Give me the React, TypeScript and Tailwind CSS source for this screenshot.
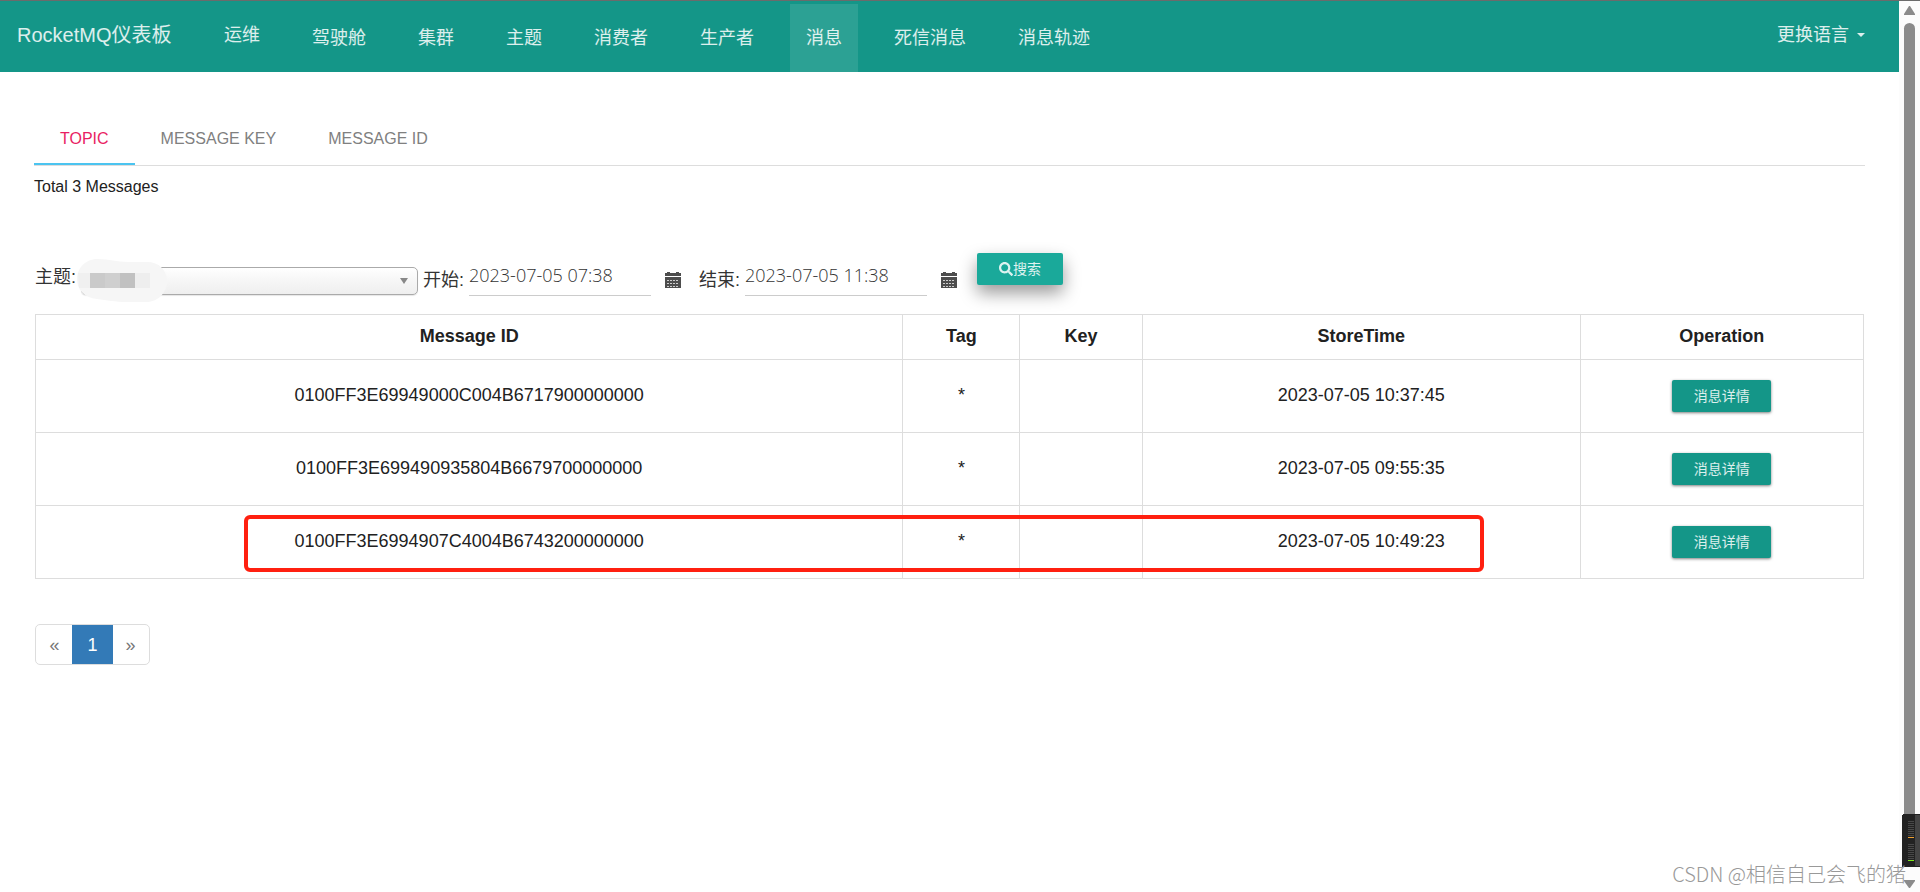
import { useState } from 'react';
import { FaSearch } from 'react-icons/fa';

interface Message {
  id: string;
  tag: string;
  key: string;
  storeTime: string;
}

const NAV_ITEMS = ['驾驶舱', '集群', '主题', '消费者', '生产者', '消息', '死信消息', '消息轨迹'];

const TABS = ['Topic', 'Message Key', 'Message ID'];

const MESSAGES: Message[] = [
  { id: '0100FF3E69949000C004B6717900000000', tag: '*', key: '', storeTime: '2023-07-05 10:37:45' },
  { id: '0100FF3E699490935804B6679700000000', tag: '*', key: '', storeTime: '2023-07-05 09:55:35' },
  { id: '0100FF3E6994907C4004B6743200000000', tag: '*', key: '', storeTime: '2023-07-05 10:49:23' },
];

function Navbar(): JSX.Element {
  return (
    <nav className="flex h-[72px] items-start border-t border-[#6b6b6b] bg-[#149688] text-lg leading-7 text-white/85">
      <a href="#/" className="w-[208px] shrink-0 pt-5 pl-[17px] text-xl leading-7">
        RocketMQ仪表板
      </a>
      <ul className="flex gap-5">
        <li>
          <a href="#/ops" className="block px-4 pt-5">
            运维
          </a>
        </li>
        {NAV_ITEMS.map((item) => (
          <li key={item} className="pt-[3px]">
            <a href={`#/${item}`} className={`block h-[68px] px-4 pt-5 ${item === '消息' ? 'bg-white/10' : ''}`}>
              {item}
            </a>
          </li>
        ))}
      </ul>
      <button type="button" className="mr-[34px] ml-auto flex items-center gap-2 pt-5">
        更换语言
        <span className="border-x-4 border-t-4 border-x-transparent border-t-white/85" />
      </button>
    </nav>
  );
}

/** Dotted month-sheet glyph that sits next to each date field. */
function CalendarIcon(): JSX.Element {
  return (
    <svg viewBox="0 0 16 16" className="h-4 w-4 fill-[#4d4d4d]" shapeRendering="crispEdges" aria-hidden="true">
      <path d="M0 1h2V0h3v1h6V0h3v1h2v3H0z" />
      <path d="M0 5h16v11H0z" />
      <path d="M2 8.5h12M2 11.5h12M2 14.5h12" stroke="#ccc" strokeDasharray="2 1" />
    </svg>
  );
}

interface DateFieldProps {
  id: string;
  label: string;
  initial: string;
}

function DateField({ id, label, initial }: DateFieldProps): JSX.Element {
  const [value, setValue] = useState(initial);

  return (
    <div className="flex items-start">
      <label htmlFor={id} className="w-[46px] pt-[13px]">
        {label}:
      </label>
      <input
        id={id}
        value={value}
        onChange={(e) => setValue(e.target.value)}
        className="h-[43px] w-[182px] border-b border-[#ccc] pt-1 pb-[2px] font-['Open_Sans',sans-serif] text-lg font-light text-[#333] outline-none"
      />
      <button type="button" aria-label={`${label}日期`} className="mt-[19px] ml-[14px]">
        <CalendarIcon />
      </button>
    </div>
  );
}

/** Mosaic smudge hiding the topic name. */
function TopicMask(): JSX.Element {
  return (
    <svg viewBox="0 0 90 44" className="pointer-events-none absolute -top-2 -left-1 h-11 w-[90px]" aria-hidden="true">
      <path d="M20 0C34 0 38 3 52 3h18c12 0 20 8 20 19s-8 21-21 21H50C38 43 30 41 20 40 8 39 0 31 0 20S9 0 20 0z" fill="#f6f6f6" />
      <path d="M1 14h12v15H2z" fill="#f0f0f0" />
      <path d="M13 14h15v15H13z" fill="#cacaca" />
      <path d="M28 14h15v15H28z" fill="#cfcfcf" />
      <path d="M43 14h15v15H43z" fill="#c1c1c1" />
      <path d="M58 14h15v15H58z" fill="#eee" />
    </svg>
  );
}

function SearchForm(): JSX.Element {
  return (
    <form className="flex items-start text-lg leading-7 text-[#333]" onSubmit={(e) => e.preventDefault()}>
      <label htmlFor="topic" className="w-[46px] pt-[10px]">
        主题:
      </label>
      <div className="relative mt-[14px] w-[337px]">
        <select
          id="topic"
          className="block h-7 w-full appearance-none rounded-[5px] border border-[#aaa] bg-linear-to-b from-white via-[#f6f6f6] to-[#efefef] px-2 text-sm shadow-[0_1px_1px_rgba(0,0,0,0.1)]"
        />
        <span className="pointer-events-none absolute top-[11px] right-[10px] border-x-4 border-t-[6px] border-x-transparent border-t-[#888]" />
        <TopicMask />
      </div>
      <div className="ml-[5px] flex gap-[18px]">
        <DateField id="begin" label="开始" initial="2023-07-05 07:38" />
        <DateField id="end" label="结束" initial="2023-07-05 11:38" />
      </div>
      <button
        type="submit"
        className="ml-5 flex h-8 w-[86px] items-center justify-center rounded-xs bg-[#1aa99a] text-sm text-white/85 shadow-[0_8px_17px_rgba(0,0,0,0.4)]"
      >
        <FaSearch className="h-[14px] w-[14px]" />
        搜索
      </button>
    </form>
  );
}

function MessageTable(): JSX.Element {
  return (
    <div className="relative mr-px">
      <table className="w-full table-fixed border-collapse text-center text-lg leading-6 text-[#212121]">
        <colgroup>
          <col className="w-[47.45%]" />
          <col className="w-[6.4%]" />
          <col className="w-[6.7%]" />
          <col className="w-[23.95%]" />
          <col className="w-[15.5%]" />
        </colgroup>
        <thead>
          <tr className="h-[45px]">
            {['Message ID', 'Tag', 'Key', 'StoreTime', 'Operation'].map((heading) => (
              <th key={heading} className="border border-[#ddd] pb-[2px]">
                {heading}
              </th>
            ))}
          </tr>
        </thead>
        <tbody>
          {MESSAGES.map((message) => (
            <tr key={message.id} className="h-[73px]">
              <td className="border border-[#ddd] pb-[2px]">{message.id}</td>
              <td className="border border-[#ddd] pb-[2px]">{message.tag}</td>
              <td className="border border-[#ddd] pb-[2px]">{message.key}</td>
              <td className="border border-[#ddd] pb-[2px]">{message.storeTime}</td>
              <td className="border border-[#ddd]">
                <button type="button" className="h-8 w-[99px] rounded-xs bg-[#149688] align-middle text-sm text-white/85 shadow-[0_1px_3px_rgba(0,0,0,0.5)]">
                  消息详情
                </button>
              </td>
            </tr>
          ))}
        </tbody>
      </table>
      <div className="pointer-events-none absolute right-[20.8%] bottom-[7px] left-[11.45%] h-[57px] rounded-md border-4 border-[#ff2010]" />
    </div>
  );
}

function Pagination(): JSX.Element {
  return (
    <div className="flex h-[41px] w-[115px] overflow-hidden rounded-[5px] border border-[#ddd] text-lg text-[#777]">
      <button type="button" aria-label="Previous" className="flex-1">
        «
      </button>
      <button type="button" className="w-[39px] bg-[#337ab7] text-white outline outline-[#337ab7]">
        1
      </button>
      <button type="button" aria-label="Next" className="flex-1">
        »
      </button>
    </div>
  );
}

function ScrollRail(): JSX.Element {
  return (
    <aside className="relative flex w-[21px] flex-col items-center border-t border-[#6b6b6b] bg-[#fcfcfc] pt-[5px] pb-1">
      <svg viewBox="0 0 11 9" className="h-[9px] w-[11px] fill-[#8b8b8b]" aria-hidden="true">
        <path d="M5 0h1l5 8v1H0V8z" />
      </svg>
      <div className="mt-2 mb-[15px] w-[11px] flex-1 rounded-full bg-[#8b8b8b]" />
      <svg viewBox="0 0 11 8" className="h-2 w-[11px] fill-[#8b8b8b]" aria-hidden="true">
        <path d="M5 8h1l5-7V0H0v1z" />
      </svg>
      <svg viewBox="0 0 18 53" className="absolute right-0 bottom-[25px] h-[53px] w-[18px]" shapeRendering="crispEdges" aria-hidden="true">
        <rect width="22" height="53" rx="2" fill="#222" />
        <path d="M13 1h5v51h-5z" fill="#444" />
        <path d="M6 7.5h6M6 9.5h6M6 11.5h6M6 13.5h6M6 15.5h6M6 17.5h6M6 19.5h6M6 21.5h6M6 30.5h6M6 32.5h6M6 34.5h6M6 36.5h6M6 38.5h6M6 40.5h6M6 42.5h6M6 44.5h6" stroke="#484848" />
        <path d="M6 23.5h6" stroke="#f0a030" />
        <path d="M6 46.5h6" stroke="#7ee81a" />
      </svg>
    </aside>
  );
}

export default function App(): JSX.Element {
  const [activeTab, setActiveTab] = useState('Topic');

  return (
    <div className="relative flex min-h-screen bg-white font-['Liberation_Sans','Noto_Sans_CJK_SC',sans-serif]">
      <div className="min-w-0 flex-1">
        <Navbar />
        <main className="px-[34px] pt-10">
          <div role="tablist" className="flex h-[54px] border-b border-[#ddd] text-base text-[#808080]">
            {TABS.map((tab) => (
              <button
                key={tab}
                type="button"
                role="tab"
                aria-selected={tab === activeTab}
                onClick={() => setActiveTab(tab)}
                className={`border-b-2 px-[26px] pt-[2px] uppercase ${tab === activeTab ? 'border-[#4bc4f0] text-[#e91e63]' : 'border-transparent'}`}
              >
                {tab}
              </button>
            ))}
          </div>
          <p className="mt-[9px] text-base leading-6 text-[#212121]">Total 3 Messages</p>
          <div className="pt-[54px] pl-px">
            <SearchForm />
            <div className="pt-[18px]">
              <MessageTable />
            </div>
            <div className="pt-[45px]">
              <Pagination />
            </div>
          </div>
        </main>
      </div>
      <ScrollRail />
      <p className="absolute right-[14px] bottom-1 font-['Noto_Sans_CJK_SC',sans-serif] text-xl leading-7 font-light text-[#999]">CSDN @相信自己会飞的猪</p>
    </div>
  );
}
